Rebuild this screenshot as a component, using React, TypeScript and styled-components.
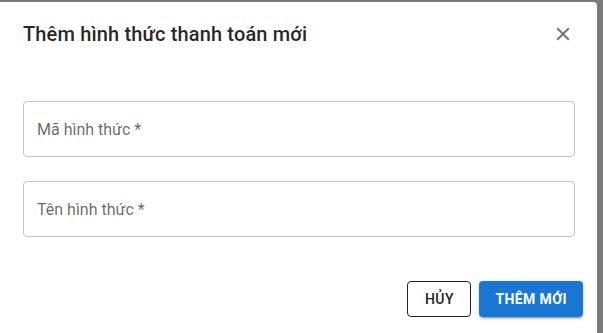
import React from 'react';
import styled, { createGlobalStyle } from 'styled-components';

const GlobalStyle = createGlobalStyle`
    html, body {
        margin: 0;
        padding: 0;
        height: 100%;
        background: #7a7a7a;
        overflow: hidden;
    }
    #root {
        height: 100%;
    }
    * {
        box-sizing: border-box;
    }
`;

const Backdrop = styled.div`
    height: 100%;
    padding-top: 2px;
    padding-right: 6px;
    font-family: Roboto, 'Noto Sans', sans-serif;
`;

const Dialog = styled.div`
    width: 597px;
    height: 100%;
    background: #fff;
    border-radius: 0 4px 0 0;
    display: flex;
    flex-direction: column;
`;

const Header = styled.div`
    height: 64px;
    padding: 0 22px 0 23px;
    display: flex;
    align-items: center;
    justify-content: space-between;
`;

const Title = styled.h2`
    margin: 0;
    font-size: 20px;
    font-weight: 500;
    color: rgba(0, 0, 0, 0.87);
    letter-spacing: 0.15px;
`;

const CloseButton = styled.button`
    border: none;
    background: none;
    padding: 0;
    width: 24px;
    height: 24px;
    color: #757575;
    display: flex;
    cursor: pointer;
`;

const Content = styled.div`
    padding: 35px 22px 0 23px;
    display: flex;
    flex-direction: column;
    gap: 24px;
`;

const Field = styled.div`
    height: 56px;
    border: 1px solid #c4c4c4;
    border-radius: 4px;
    display: flex;
    align-items: center;
    padding: 0 13px;
`;

const Label = styled.span`
    font-size: 16px;
    color: rgba(0, 0, 0, 0.6);
`;

const Actions = styled.div`
    display: flex;
    justify-content: flex-end;
    gap: 8px;
    padding: 44px 14px 0 0;
`;

const Button = styled.button<{ primary?: boolean }>`
    height: 36px;
    padding: 0 16px;
    min-width: 64px;
    border-radius: 4px;
    font-family: Roboto, 'Noto Sans', sans-serif;
    font-size: 14px;
    font-weight: ${({ primary }) => (primary ? 700 : 500)};
    letter-spacing: 0.4px;
    text-transform: uppercase;
    cursor: pointer;
    border: ${({ primary }) => (primary ? 'none' : '1px solid #222')};
    color: ${({ primary }) => (primary ? '#fff' : '#222')};
    background: ${({ primary }) => (primary ? '#1976d2' : '#fff')};
    box-shadow: ${({ primary }) =>
        primary
            ? '0 3px 1px -2px rgba(0,0,0,0.2), 0 2px 2px 0 rgba(0,0,0,0.14), 0 1px 5px 0 rgba(0,0,0,0.12)'
            : 'none'};
`;

const CloseIcon = () => (
    <svg width="24" height="24" viewBox="0 0 24 24" fill="currentColor">
        <path d="M18.5 6.91 17.09 5.5 12 10.59 6.91 5.5 5.5 6.91 10.59 12 5.5 17.09 6.91 18.5 12 13.41 17.09 18.5 18.5 17.09 13.41 12z" />
    </svg>
);

const App: React.FunctionComponent = () => (
    <>
        <GlobalStyle />
        <Backdrop>
            <Dialog>
                <Header>
                    <Title>Thêm hình thức thanh toán mới</Title>
                    <CloseButton aria-label="close">
                        <CloseIcon />
                    </CloseButton>
                </Header>
                <Content>
                    <Field>
                        <Label>Mã hình thức *</Label>
                    </Field>
                    <Field>
                        <Label>Tên hình thức *</Label>
                    </Field>
                </Content>
                <Actions>
                    <Button>Hủy</Button>
                    <Button primary>Thêm mới</Button>
                </Actions>
            </Dialog>
        </Backdrop>
    </>
);

export default App;
